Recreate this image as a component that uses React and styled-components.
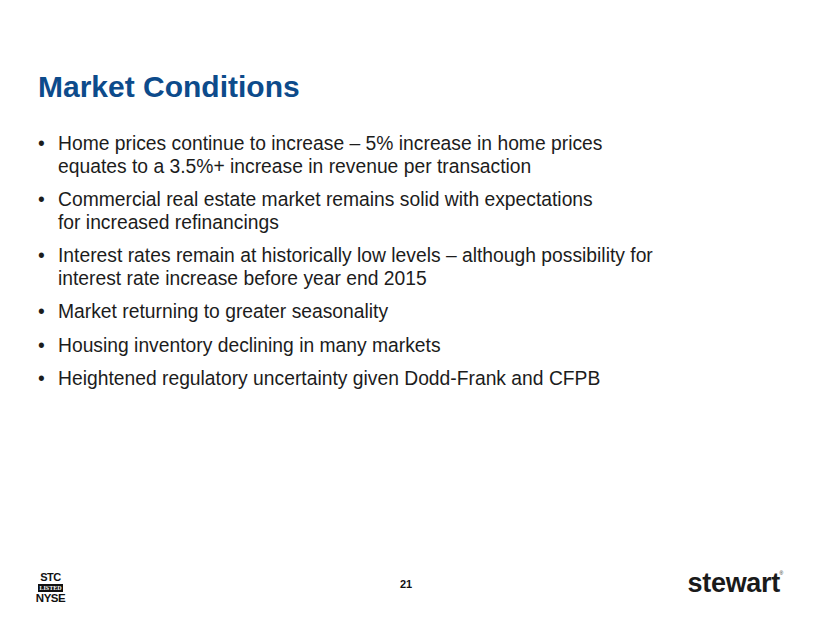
import React from 'react';
import styled, { createGlobalStyle } from 'styled-components';

const GlobalStyle = createGlobalStyle`
  html, body {
    margin: 0;
    padding: 0;
    background: #ffffff;
  }
  body {
    font-family: "Liberation Sans", Arial, sans-serif;
  }
`;

const Slide = styled.div`
  width: 820px;
  height: 627px;
  box-sizing: border-box;
  padding: 70px 0 0 38px;
  display: flex;
  flex-direction: column;
  background: #ffffff;
  overflow: hidden;
`;

const Title = styled.h1`
  margin: 0;
  font-size: 30px;
  line-height: 34px;
  font-weight: 700;
  color: #0d4b8b;
`;

const BulletList = styled.ul`
  list-style: none;
  margin: 29px 0 0;
  padding: 0;
  display: flex;
  flex-direction: column;
  gap: 11px;
`;

const Bullet = styled.li`
  display: flex;
  font-size: 19.3px;
  line-height: 22.5px;
  color: #1c1c1c;

  &::before {
    content: '•';
    width: 20px;
    flex: none;
  }
`;

const Footer = styled.footer`
  margin-top: auto;
  margin-bottom: 23px;
  padding-right: 38px;
  display: grid;
  grid-template-columns: 1fr auto 1fr;
  align-items: start;
`;

const NyseMark = styled.div`
  justify-self: start;
  display: flex;
  flex-direction: column;
  align-items: center;
  width: 25px;
  font-weight: 700;
  color: #111;
  line-height: 1;
`;

const MarkWord = styled.span`
  font-size: ${p => p.$size}px;
  letter-spacing: -0.5px;
`;

const Listed = styled.span`
  margin: 1px 0;
  padding: 1px 1px;
  background: #111;
  color: #fff;
  font-family: "Liberation Serif", "Times New Roman", serif;
  font-size: 6px;
  letter-spacing: 0;
`;

const PageNumber = styled.span`
  margin: 6px 8px 0 0;
  font-size: 11px;
  font-weight: 700;
  color: #111;
`;

const Brand = styled.div`
  justify-self: end;
  position: relative;
  margin-top: -2px;
  font-size: 27px;
  font-weight: 700;
  letter-spacing: -0.3px;
  color: #1a1a1a;
  line-height: 1;
  padding-right: 2px;
`;

const Registered = styled.span`
  position: absolute;
  top: 1px;
  right: -1px;
  font-size: 5px;
  font-weight: 400;
`;

const bullets = [
  ['Home prices continue to increase \u2013 5% increase in home prices', 'equates to a 3.5%+ increase in revenue per transaction'],
  ['Commercial real estate market remains solid with expectations', 'for increased refinancings'],
  ['Interest rates remain at historically low levels \u2013 although possibility for', 'interest rate increase before year end 2015'],
  ['Market returning to greater seasonality'],
  ['Housing inventory declining in many markets'],
  ['Heightened regulatory uncertainty given Dodd-Frank and CFPB'],
];

export default function App() {
  return (
    <>
      <GlobalStyle />
      <Slide>
        <Title>Market Conditions</Title>
        <BulletList>
          {bullets.map((lines, i) => (
            <Bullet key={i}>
              <span>
                {lines.map((l, j) => (
                  <React.Fragment key={j}>
                    {j > 0 && <br />}
                    {l}
                  </React.Fragment>
                ))}
              </span>
            </Bullet>
          ))}
        </BulletList>
        <Footer>
          <NyseMark>
            <MarkWord $size={11}>STC</MarkWord>
            <Listed>LISTED</Listed>
            <MarkWord $size={11.5}>NYSE</MarkWord>
          </NyseMark>
          <PageNumber>21</PageNumber>
          <Brand>
            stewart
            <Registered>®</Registered>
          </Brand>
        </Footer>
      </Slide>
    </>
  );
}
